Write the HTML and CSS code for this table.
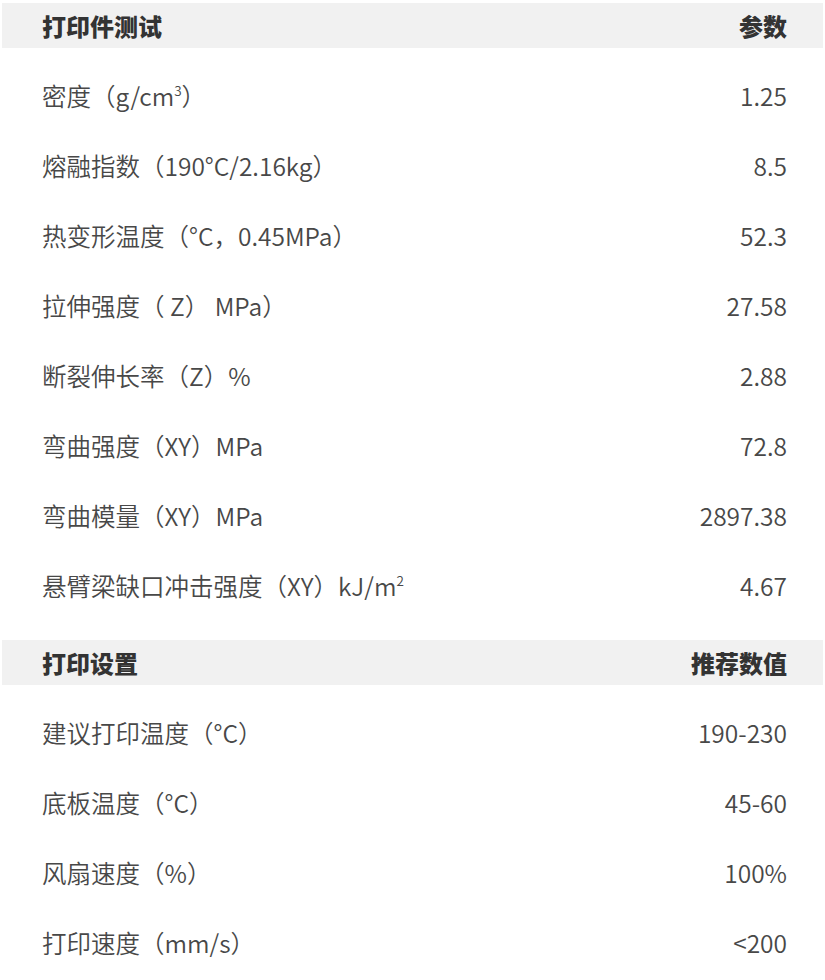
FILE: index.html
```html
<!DOCTYPE html>
<html lang="zh">
<head>
<meta charset="utf-8">
<link rel="stylesheet" href="styles.css">
</head>
<body>
<div class="sheet">
  <section class="group first">
    <div class="head"><span>打印件测试</span><span>参数</span></div>
    <div class="rows">
      <div class="row"><span>密度（g/cm<sup>3</sup>）</span><span>1.25</span></div>
      <div class="row"><span>熔融指数（190°C/2.16kg）</span><span>8.5</span></div>
      <div class="row"><span>热变形温度（°C，0.45MPa）</span><span>52.3</span></div>
      <div class="row"><span>拉伸强度（ Z） MPa）</span><span>27.58</span></div>
      <div class="row"><span>断裂伸长率（Z）%</span><span>2.88</span></div>
      <div class="row"><span>弯曲强度（XY）MPa</span><span>72.8</span></div>
      <div class="row"><span>弯曲模量（XY）MPa</span><span>2897.38</span></div>
      <div class="row"><span>悬臂梁缺口冲击强度（XY）kJ/m<sup>2</sup></span><span>4.67</span></div>
    </div>
  </section>
  <section class="group second">
    <div class="head"><span>打印设置</span><span>推荐数值</span></div>
    <div class="rows">
      <div class="row"><span>建议打印温度（°C）</span><span>190-230</span></div>
      <div class="row"><span>底板温度（°C）</span><span>45-60</span></div>
      <div class="row"><span>风扇速度（%）</span><span>100%</span></div>
      <div class="row"><span>打印速度（mm/s）</span><span>&lt;200</span></div>
    </div>
  </section>
</div>
</body>
</html>
```
FILE: styles.css
```css
html, body {
  margin: 0;
  padding: 0;
  background: #ffffff;
}
.sheet {
  width: 825px;
  font-family: "Noto Sans CJK SC", "Noto Sans", sans-serif;
  font-size: 24.5px;
  font-weight: 350;
  color: #484848;
}
.group.first {
  padding-top: 3px;
}
.group.second {
  margin-top: 20px;
}
.head {
  display: flex;
  justify-content: space-between;
  align-items: center;
  height: 45px;
  margin: 0 2px;
  padding: 0 36px 0 40px;
  background: #f1f1f1;
  color: #333333;
  font-weight: 900;
  font-size: 24px;
}
.rows {
  padding-top: 12px;
}
.row {
  display: flex;
  justify-content: space-between;
  align-items: center;
  height: 70px;
  padding: 0 38px 0 42px;
}
sup {
  font-size: 0.55em;
  vertical-align: 0.75em;
  line-height: 0;
}
```
